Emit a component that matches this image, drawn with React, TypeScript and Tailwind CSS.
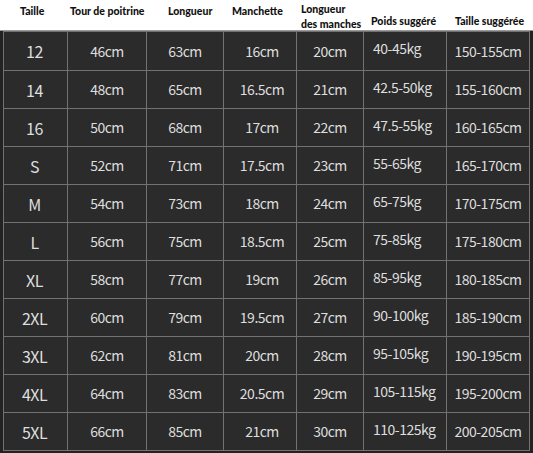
type Row = {
  size: string;
  chest: string;
  length: string;
  cuff: string;
  sleeve: string;
  weight: string;
  height: string;
};

const rows: Row[] = [
  { size: '12', chest: '46cm', length: '63cm', cuff: '16cm', sleeve: '20cm', weight: '40-45kg', height: '150-155cm' },
  { size: '14', chest: '48cm', length: '65cm', cuff: '16.5cm', sleeve: '21cm', weight: '42.5-50kg', height: '155-160cm' },
  { size: '16', chest: '50cm', length: '68cm', cuff: '17cm', sleeve: '22cm', weight: '47.5-55kg', height: '160-165cm' },
  { size: 'S', chest: '52cm', length: '71cm', cuff: '17.5cm', sleeve: '23cm', weight: '55-65kg', height: '165-170cm' },
  { size: 'M', chest: '54cm', length: '73cm', cuff: '18cm', sleeve: '24cm', weight: '65-75kg', height: '170-175cm' },
  { size: 'L', chest: '56cm', length: '75cm', cuff: '18.5cm', sleeve: '25cm', weight: '75-85kg', height: '175-180cm' },
  { size: 'XL', chest: '58cm', length: '77cm', cuff: '19cm', sleeve: '26cm', weight: '85-95kg', height: '180-185cm' },
  { size: '2XL', chest: '60cm', length: '79cm', cuff: '19.5cm', sleeve: '27cm', weight: '90-100kg', height: '185-190cm' },
  { size: '3XL', chest: '62cm', length: '81cm', cuff: '20cm', sleeve: '28cm', weight: '95-105kg', height: '190-195cm' },
  { size: '4XL', chest: '64cm', length: '83cm', cuff: '20.5cm', sleeve: '29cm', weight: '105-115kg', height: '195-200cm' },
  { size: '5XL', chest: '66cm', length: '85cm', cuff: '21cm', sleeve: '30cm', weight: '110-125kg', height: '200-205cm' },
];

const cols = 'grid grid-cols-[63px_78px_76px_72px_66px_82px_82px] gap-x-px';

export default function App() {
  return (
    <div className="w-[533px] h-[453px] overflow-hidden bg-white font-['Noto_Sans_CJK_SC','Noto_Sans',sans-serif]">
      {/* header, each label placed as in the original sheet */}
      <div className={`${cols} h-[30px] pl-[4px] font-['Lato','Open_Sans',sans-serif] font-black text-[10.5px] leading-[13px] text-[#111] whitespace-nowrap`}>
        <div className="pt-[5px] pl-[16px]">Taille</div>
        <div className="pt-[5px] pl-[2px]">Tour de poitrine</div>
        <div className="pt-[5px] pl-[21px]">Longueur</div>
        <div className="pt-[5px] pl-[8px]">Manchette</div>
        <div className="flex flex-col pt-[2px] pl-[4px] leading-[15px]">
          <span>Longueur</span>
          <span>des manches</span>
        </div>
        <div className="pt-[15px] pl-[7px]">Poids suggéré</div>
        <div className="pt-[15px] pl-[8px]">Taille suggérée</div>
      </div>
      <div className="h-[1px] bg-[#9a9a9a]" />
      <div className="h-[422px] bg-[#232323] pl-[3px] pr-[3px]">
        <div className="w-[527px] bg-[#727272] flex flex-col gap-y-px p-px">
          {rows.map((r, i) => (
            <div
              key={r.size}
              className={`${cols} ${i === 0 ? 'h-[38px]' : 'h-[37px]'} text-[14px] tracking-[-0.5px] text-[#dedede]`}
            >
              <div className="bg-[#2b2b2b] flex items-center justify-center text-[16px] pr-[2px]">{r.size}</div>
              <div className="bg-[#2b2b2b] flex items-center justify-center">{r.chest}</div>
              <div className="bg-[#2b2b2b] flex items-center justify-center">{r.length}</div>
              <div className="bg-[#2b2b2b] flex items-center justify-center pl-[4px]">{r.cuff}</div>
              <div className="bg-[#2b2b2b] flex items-center justify-center">{r.sleeve}</div>
              <div className="bg-[#2b2b2b] flex items-center pl-[9px] pb-[5px]">{r.weight}</div>
              <div className="bg-[#2b2b2b] flex items-center justify-center">{r.height}</div>
            </div>
          ))}
        </div>
      </div>
    </div>
  );
}
